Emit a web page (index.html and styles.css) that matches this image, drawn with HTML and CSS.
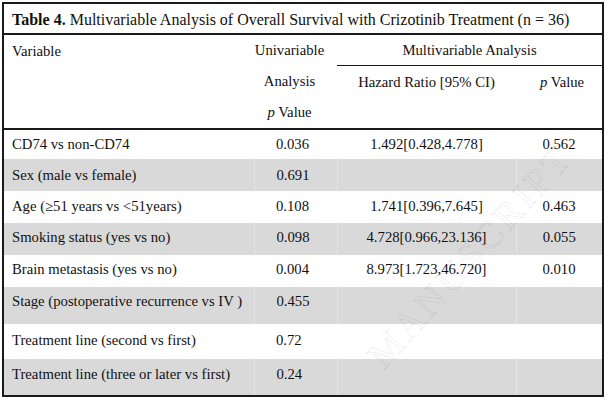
FILE: index.html
```html
<!DOCTYPE html>
<html>
<head>
<meta charset="utf-8">
<link rel="stylesheet" href="styles.css">
</head>
<body>
<div class="page">
<table class="tbl">
  <colgroup>
    <col class="c1"><col class="c2"><col class="c3"><col class="c4">
  </colgroup>
  <tr class="title-row"><td colspan="4" class="title"><b>Table 4.</b> Multivariable Analysis of Overall Survival with Crizotinib Treatment (n = 36)</td></tr>
  <tr class="h1">
    <td rowspan="2" class="var-h">Variable</td>
    <td rowspan="2" class="uni-h">Univariable<br>Analysis<br><i>p</i> Value</td>
    <td colspan="2" class="multi-h">Multivariable Analysis</td>
  </tr>
  <tr class="h2">
    <td class="hz-h">Hazard Ratio [95% CI)</td>
    <td class="pv-h"><i>p</i> Value</td>
  </tr>
  <tr class="r r1"><td class="v">CD74 vs non-CD74</td><td class="u">0.036</td><td class="hz">1.492[0.428,4.778]</td><td class="pv">0.562</td></tr>
  <tr class="r r2 g"><td class="v">Sex (male vs female)</td><td class="u">0.691</td><td class="hz"></td><td class="pv"></td></tr>
  <tr class="r r3"><td class="v">Age (≥51 years vs &lt;51years)</td><td class="u">0.108</td><td class="hz">1.741[0.396,7.645]</td><td class="pv">0.463</td></tr>
  <tr class="r r4 g"><td class="v">Smoking status (yes vs no)</td><td class="u">0.098</td><td class="hz">4.728[0.966,23.136]</td><td class="pv">0.055</td></tr>
  <tr class="r r5"><td class="v">Brain metastasis (yes vs no)</td><td class="u">0.004</td><td class="hz">8.973[1.723,46.720]</td><td class="pv">0.010</td></tr>
  <tr class="r r6 g"><td class="v">Stage (postoperative recurrence vs IV )</td><td class="u">0.455</td><td class="hz"></td><td class="pv"></td></tr>
  <tr class="r r7"><td class="v">Treatment line (second vs first)</td><td class="u">0.72</td><td class="hz"></td><td class="pv"></td></tr>
  <tr class="r r8 g"><td class="v">Treatment line (three or later vs first)</td><td class="u">0.24</td><td class="hz"></td><td class="pv"></td></tr>
</table>
<div class="wm">MANUSCRIPT</div>
</div>
</body>
</html>
```

FILE: styles.css
```css
html, body {
  margin: 0;
  padding: 0;
  background: #ffffff;
}
.page {
  position: relative;
  padding: 2px 0 0 2px;
  font-family: "Liberation Serif", "Times New Roman", serif;
  color: #111111;
  overflow: hidden;
  height: 398px;
}
.tbl {
  border-collapse: collapse;
  width: 602px;
  table-layout: fixed;
  border: 2px solid #1a1a1a;
  font-size: 14.7px;
}
.c1 { width: 251px; }
.c2 { width: 83px; }
.c3 { width: 179px; }
.c4 { width: 87px; }
.tbl td {
  padding: 0;
  vertical-align: top;
  line-height: 20px;
}
.title-row { height: 31px; }
.title {
  font-size: 16px;
  padding: 6px 0 0 8px !important;
  border-bottom: 2px solid #1a1a1a;
}
.h1 { height: 31px; }
.h2 { height: 63px; }
.var-h {
  padding: 6px 0 0 8px !important;
  border-bottom: 2px solid #1a1a1a;
}
.uni-h {
  text-align: center;
  line-height: 31px !important;
  padding: 0 12px 0 0 !important;
  border-bottom: 2px solid #1a1a1a;
}
.multi-h {
  text-align: center;
  padding: 5px 0 0 0 !important;
  border-bottom: 1px solid #1a1a1a;
}
.hz-h {
  text-align: center;
  padding: 6px 0 0 0 !important;
  border-bottom: 2px solid #1a1a1a;
}
.pv-h {
  text-align: center;
  padding: 6px 0 0 6px !important;
  border-bottom: 2px solid #1a1a1a;
}
.r td { padding-top: 4px; }
.r1 { height: 30px; }
.r2 { height: 32px; }
.r3 { height: 32px; }
.r4 { height: 32px; }
.r5 { height: 32px; }
.r6 { height: 37px; }
.r7 { height: 35px; }
.r8 { height: 37px; }
.r2 td { padding-top: 6px; }
.r3 td { padding-top: 5px; }
.r5 td { padding-top: 4px; }
.r6 td { padding-top: 4px; }
.r7 td { padding-top: 6px; }
.r8 td { padding-top: 5px; }
.g td {
  background: #d9d9d9;
}
.g td + td {
  border-left: 1px solid #e4e4e4;
}
.v { padding-left: 8px !important; }
.u { padding-left: 22px !important; }
.hz { text-align: center; }
.pv { text-align: center; }
.wm {
  position: absolute;
  left: 470px;
  top: 256px;
  transform: translate(-50%, -50%) rotate(-48deg);
  font-family: "Liberation Serif", serif;
  font-size: 38px;
  line-height: 40px;
  letter-spacing: 4px;
  white-space: nowrap;
  color: transparent;
  -webkit-text-stroke: 1px rgba(0, 0, 0, 0.07);
  pointer-events: none;
}
```
